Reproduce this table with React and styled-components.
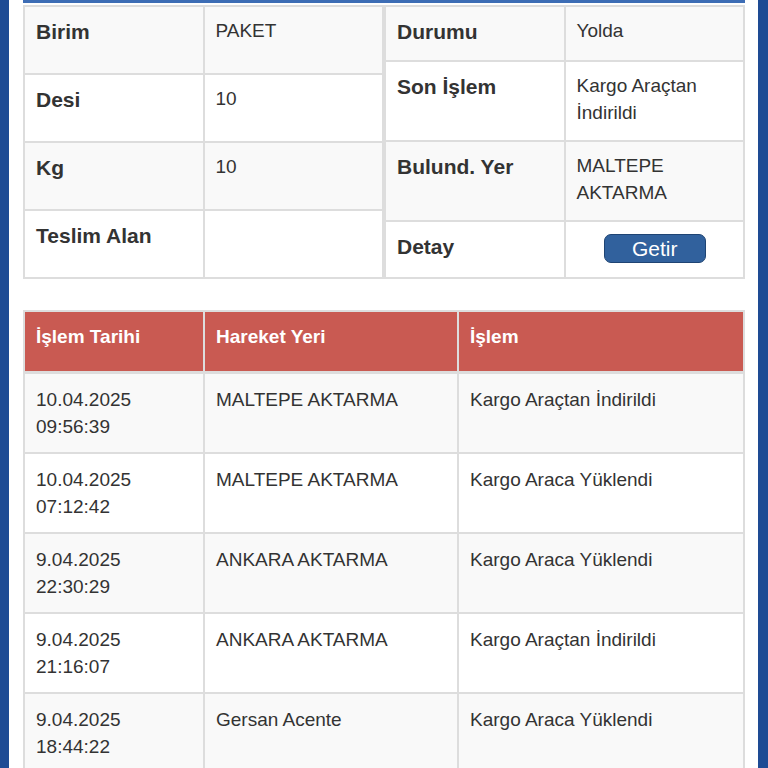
import React from 'react';
import styled, {createGlobalStyle} from 'styled-components';

const GlobalStyle = createGlobalStyle`
    html, body {
        margin: 0;
        padding: 0;
        background: #ffffff;
        overflow: hidden;
    }
    body {
        font-family: "Liberation Sans", Arial, Helvetica, sans-serif;
        color: #333333;
    }
`;

const Frame = styled.div`
    min-height: 100vh;
    box-sizing: border-box;
    border-left: 9px solid #1e4b94;
    border-right: 10px solid #1e4b94;
    padding: 0 13px 0 14px;
    background: #ffffff;
`;

const PanelStrip = styled.div`
    height: 3px;
    background: #3d6db5;
    margin-bottom: 2px;
`;

const InfoRow = styled.div`
    display: flex;
    align-items: stretch;
`;

const InfoTable = styled.table`
    width: 50%;
    border-collapse: collapse;
    table-layout: fixed;
`;

const InfoTr = styled.tr`
    background: ${p => (p.$odd ? '#f9f9f9' : '#ffffff')};
`;

const LabelCell = styled.td`
    border: 2px solid #dddddd;
    padding: 10px 12px 14px 11px;
    vertical-align: top;
    font-size: 21px;
    line-height: 29px;
    font-weight: bold;
    color: #333333;
`;

const ValueCell = styled.td`
    border: 2px solid #dddddd;
    padding: 10px 12px 14px 11px;
    vertical-align: top;
    font-size: 19px;
    line-height: 27px;
    color: #333333;
    text-align: ${p => (p.$center ? 'center' : 'left')};
`;

const GetirButton = styled.button`
    display: inline-block;
    vertical-align: top;
    width: 102px;
    height: 29px;
    margin: 2px 0 0 2px;
    padding: 0;
    border: 1px solid #1f4473;
    border-radius: 7px;
    background: #31619d;
    color: #ffffff;
    font-family: "Liberation Sans", Arial, sans-serif;
    font-size: 21px;
    line-height: 27px;
    cursor: pointer;
`;

const HistoryTable = styled.table`
    width: 100%;
    margin-top: 31px;
    border-collapse: collapse;
    table-layout: fixed;
`;

const HeadCell = styled.th`
    background: #c95a52;
    color: #ffffff;
    text-align: left;
    font-size: 19px;
    line-height: 27px;
    font-weight: bold;
    padding: 11px 12px 21px 11px;
    border: 2px solid #dddddd;
    border-bottom-width: 3px;
    vertical-align: top;
`;

const HistoryTr = styled.tr`
    background: ${p => (p.$odd ? '#f9f9f9' : '#ffffff')};
`;

const HistoryCell = styled.td`
    border: 2px solid #dddddd;
    padding: 12px 12px 12px 11px;
    vertical-align: top;
    font-size: 19px;
    line-height: 27px;
    height: 54px;
    color: #333333;
`;

const leftInfo = [
    ['Birim', 'PAKET'],
    ['Desi', '10'],
    ['Kg', '10'],
    ['Teslim Alan', ''],
];

const rightInfo = [
    ['Durumu', 'Yolda'],
    ['Son İşlem', 'Kargo Araçtan İndirildi'],
    ['Bulund. Yer', 'MALTEPE AKTARMA'],
];

const history = [
    ['10.04.2025', '09:56:39', 'MALTEPE AKTARMA', 'Kargo Araçtan İndirildi'],
    ['10.04.2025', '07:12:42', 'MALTEPE AKTARMA', 'Kargo Araca Yüklendi'],
    ['9.04.2025', '22:30:29', 'ANKARA AKTARMA', 'Kargo Araca Yüklendi'],
    ['9.04.2025', '21:16:07', 'ANKARA AKTARMA', 'Kargo Araçtan İndirildi'],
    ['9.04.2025', '18:44:22', 'Gersan Acente', 'Kargo Araca Yüklendi'],
];

const InfoCols = () => (
    <colgroup>
        <col style={{width: '50%'}}/>
        <col style={{width: '50%'}}/>
    </colgroup>
);

const App = () => {
    return (
        <Frame>
            <GlobalStyle/>
            <PanelStrip/>
            <InfoRow>
                <InfoTable>
                    <InfoCols/>
                    <tbody>
                        {leftInfo.map(([label, value], i) => (
                            <InfoTr key={label} $odd={i % 2 === 0}>
                                <LabelCell>{label}</LabelCell>
                                <ValueCell>{value}</ValueCell>
                            </InfoTr>
                        ))}
                    </tbody>
                </InfoTable>
                <InfoTable>
                    <InfoCols/>
                    <tbody>
                        {rightInfo.map(([label, value], i) => (
                            <InfoTr key={label} $odd={i % 2 === 0}>
                                <LabelCell>{label}</LabelCell>
                                <ValueCell>{value}</ValueCell>
                            </InfoTr>
                        ))}
                        <InfoTr>
                            <LabelCell>Detay</LabelCell>
                            <ValueCell $center>
                                <GetirButton>Getir</GetirButton>
                            </ValueCell>
                        </InfoTr>
                    </tbody>
                </InfoTable>
            </InfoRow>
            <HistoryTable>
                <colgroup>
                    <col style={{width: '180px'}}/>
                    <col style={{width: '254px'}}/>
                    <col/>
                </colgroup>
                <thead>
                    <tr>
                        <HeadCell>İşlem Tarihi</HeadCell>
                        <HeadCell>Hareket Yeri</HeadCell>
                        <HeadCell>İşlem</HeadCell>
                    </tr>
                </thead>
                <tbody>
                    {history.map(([date, time, place, action], i) => (
                        <HistoryTr key={i} $odd={i % 2 === 0}>
                            <HistoryCell>{date}<br/>{time}</HistoryCell>
                            <HistoryCell>{place}</HistoryCell>
                            <HistoryCell>{action}</HistoryCell>
                        </HistoryTr>
                    ))}
                </tbody>
            </HistoryTable>
        </Frame>
    );
};

export default App;
